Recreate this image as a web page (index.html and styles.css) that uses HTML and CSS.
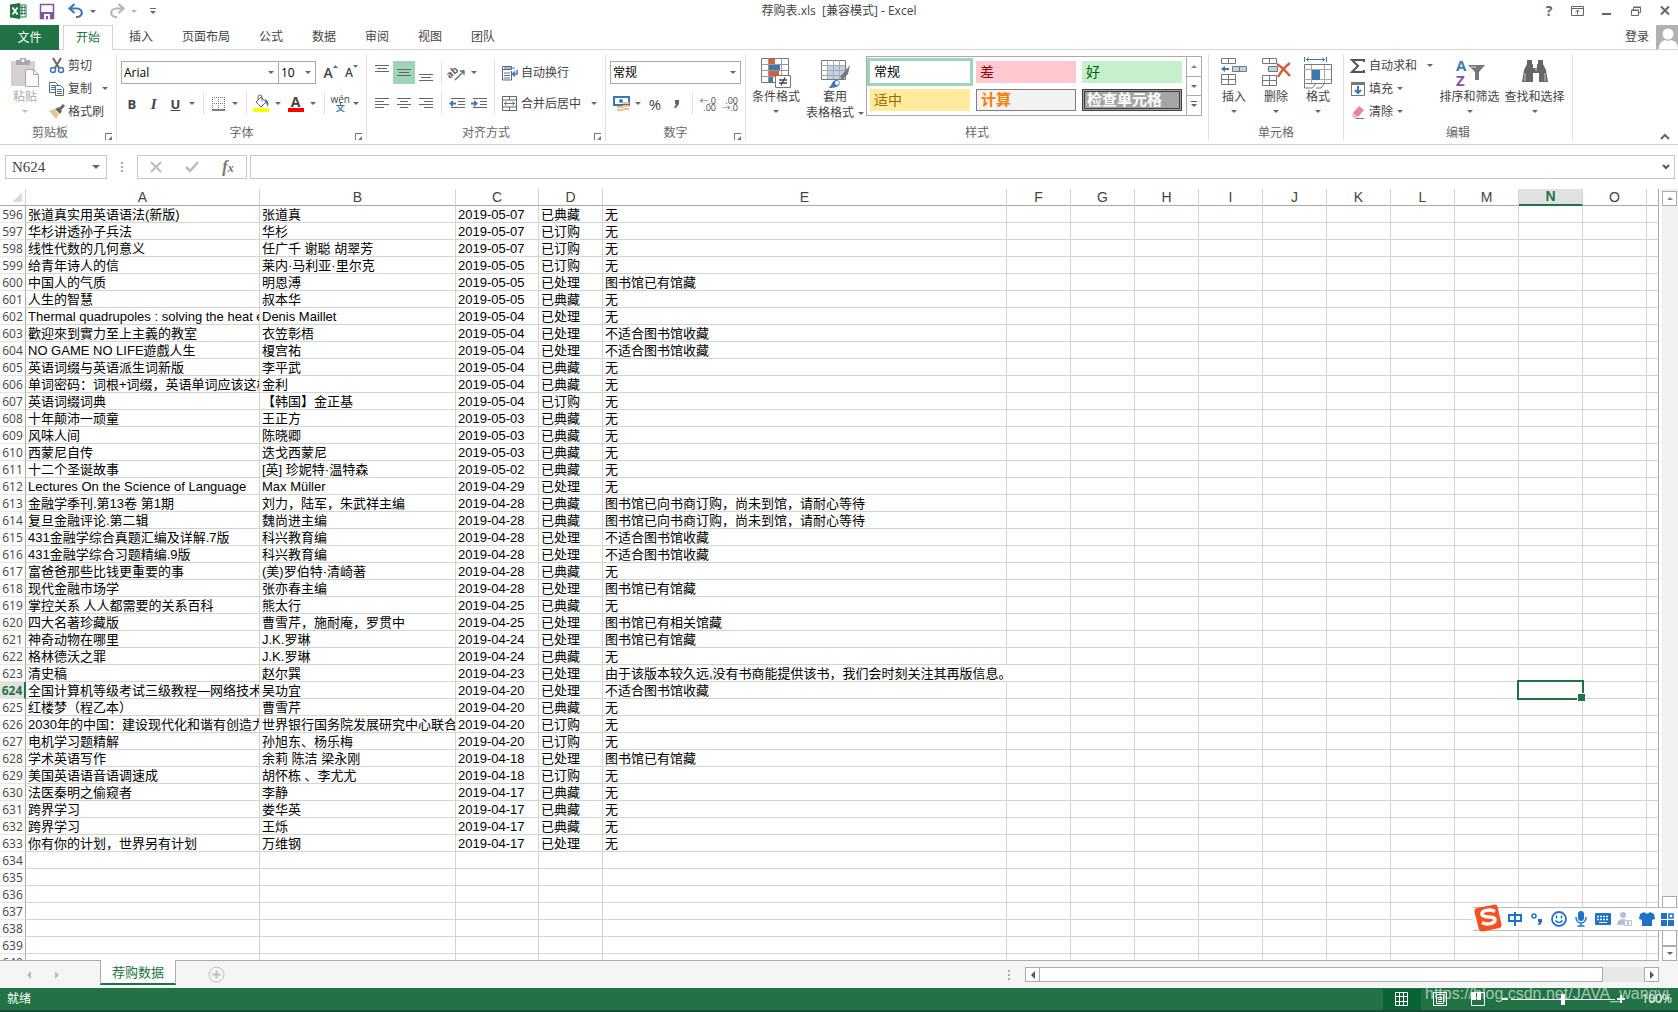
FILE: index.html
```html
<!DOCTYPE html>
<html lang="zh-CN">
<head>
<meta charset="utf-8">
<title>荐购表.xls [兼容模式] - Excel</title>
<link rel="stylesheet" href="styles.css">
</head>
<body>
<header class="titlebar">
  <div class="quick">
    <svg class="ico" width="22" height="18" viewBox="0 0 22 18"><path d="M13 3h6v12h-6z" fill="#fff" stroke="#217346"/><path d="M14 5h2v1h-2zM17 5h1v1h-1zM14 8h2v1h-2zM17 8h1v1h-1zM14 11h2v1h-2zM17 11h1v1h-1z" fill="#217346" stroke="#217346"/><path d="M3 2.500 13 1v16L3 15.500z" fill="#217346"/><path d="m5.500 5.500 5 7M10.500 5.500l-5 7" stroke="#fff" stroke-width="1.800"/></svg>
    <button class="btn" aria-label="保存"><svg width="22" height="18" viewBox="0 0 22 18"><path d="M4.500 2.500h13v14h-13z" fill="#fff" stroke="#8453a8" stroke-width="1.500"/><path d="M4 10h14v7H4z" fill="#8453a8"/><path d="M8 12h6v5h-2v-3h-2v3H8z" fill="#fff"/></svg></button>
    <span class="split"><button class="btn" aria-label="撤消"><svg width="22" height="18" viewBox="0 0 22 18"><path d="M5 6.500h7a4.500 4 0 0 1 0 8.500h-1M9.500 2 4.500 6.500l5 4.500" fill="none" stroke="#3e78b3" stroke-width="2.200"/></svg></button><button class="arrow" aria-label="撤消选项"></button></span>
    <span class="split"><button class="btn" aria-label="恢复"><svg width="22" height="18" viewBox="0 0 22 18"><path d="M17 6.500h-7a4.500 4 0 0 0 0 8.500h1M12.500 2l5 4.500-5 4.500" fill="none" stroke="#b5b5b5" stroke-width="2.200"/></svg></button><button class="arrow pale" aria-label="恢复选项"></button></span>
    <button class="arrow lined" aria-label="自定义快速访问工具栏"></button>
  </div>
  <h1 class="title">荐购表.xls&nbsp; [兼容模式] - Excel</h1>
  <div class="winctl">
    <button class="btn" aria-label="帮助"><b>?</b></button>
    <button class="btn" aria-label="功能区显示选项"><svg width="14" height="12" viewBox="0 0 14 12"><path d="M.5 1.500h12v9H.5zM.5 3.500h12M6.500 9.500V5M4.500 7l2-2 2 2" fill="none" stroke="#666"/></svg></button>
    <button class="btn" aria-label="最小化"><svg width="14" height="12" viewBox="0 0 14 12"><path d="M2 8h9v2H2z" fill="#666"/></svg></button>
    <button class="btn" aria-label="还原"><svg width="14" height="12" viewBox="0 0 14 12"><path d="M4.500 5V2.500h7v5H9M2.500 5.500h7v5h-7zM2 5h8M4 2h8" fill="none" stroke="#666"/></svg></button>
    <button class="btn" aria-label="关闭"><svg width="14" height="12" viewBox="0 0 14 12"><path d="m3 1.500 8 8M11 1.500l-8 8" stroke="#666" stroke-width="2"/></svg></button>
  </div>
</header>

<nav class="tabs">
  <button class="tab file">文件</button>
  <button class="tab active">开始</button>
  <button class="tab">插入</button>
  <button class="tab">页面布局</button>
  <button class="tab">公式</button>
  <button class="tab">数据</button>
  <button class="tab">审阅</button>
  <button class="tab">视图</button>
  <button class="tab">团队</button>
  <a class="signin" href="#">登录
    <svg width="22" height="24" viewBox="0 0 22 24"><path d="M0 0h22v24H0z" fill="#b1b1b1"/><circle cx="12" cy="9" r="5.500" fill="#fff"/><path d="M3 24c0-6 3-8 6-9l3 1 3-1c4 1 7 3 7 9z" fill="#fff"/></svg>
  </a>
</nav>

<section class="ribbon">
  <div class="group g-clip">
    <div class="body">
      <button class="big disabled"><svg width="30" height="32" viewBox="0 0 30 32"><path d="M1 4h24v25H1z" fill="#d4d0d4"/><path d="M6 3h4V1h6v2h4v5H6z" fill="#a9a6a9"/><circle cx="13" cy="3.500" r="1.500" fill="#fff"/><path d="M15.500 12.500h8l5 5v12h-13z" fill="#fbf7fd" stroke="#a9a6a9"/><path d="M23.500 12.500v5h5" fill="none" stroke="#a9a6a9"/></svg><span>粘贴</span><i class="tri"></i></button>
      <div class="stack">
        <button class="item"><svg width="16" height="16" viewBox="0 0 16 16"><path d="m4 0 6 10M12 0 6 10" stroke="#666" stroke-width="2"/><circle cx="4" cy="12" r="2.500" fill="none" stroke="#3e78b3" stroke-width="1.500"/><circle cx="12" cy="12" r="2.500" fill="none" stroke="#3e78b3" stroke-width="1.500"/></svg>剪切</button>
        <button class="item"><svg width="16" height="16" viewBox="0 0 16 16"><path d="M.5 1.500h6l2 2v8h-8z" fill="#fff" stroke="#666"/><path d="M2 4.500h4M2 6.500h4M2 8.500h4" stroke="#3e78b3"/><path d="M6.500 4.500h5l3 3v7h-8z" fill="#fff" stroke="#666"/><path d="M8 8.500h5M8 10.500h5M8 12.500h5" stroke="#3e78b3"/></svg>复制<i class="tri far"></i></button>
        <button class="item"><svg width="16" height="16" viewBox="0 0 16 16"><path d="m0 7 5-2 5 5-3 5z" fill="#ecc389"/><path d="m6 5 4-2 3 4-2 3z" fill="#666"/><path d="m11 5 4-4" stroke="#666" stroke-width="3"/></svg>格式刷</button>
      </div>
    </div>
    <div class="caption">剪贴板<button class="launch" aria-label="剪贴板设置"></button></div>
  </div>

  <div class="group g-font">
    <div class="body rows">
      <div class="row">
        <label class="combo font"><select aria-label="字体"><option>Arial</option></select></label><label class="combo size"><select aria-label="字号"><option>10</option></select></label>
        <button class="btn tool grow" aria-label="增大字号"><b>A</b><svg width="5" height="3" viewBox="0 0 5 3"><path d="M0 3h5L2.500 0z" fill="#3e78b3"/></svg></button>
        <button class="btn tool shrink" aria-label="减小字号"><b>A</b><svg width="5" height="3" viewBox="0 0 5 3"><path d="M0 0h5L2.500 3z" fill="#3e78b3"/></svg></button>
      </div>
      <div class="row">
        <button class="btn tool"><b>B</b></button><button class="btn tool"><b class="ital">I</b></button><button class="btn tool"><b class="under">U</b></button><button class="arrow" aria-label="下划线选项"></button>
        <i class="sep"></i>
        <button class="btn narrow" aria-label="边框"><svg width="14" height="14" viewBox="0 0 14 14"><path d="M.5 0v13M6.500 0v13M12.500 0v13M0 .5h13M0 6.500h13" stroke="#777" stroke-dasharray="1 1"/><path d="M0 13h13" stroke="#555" stroke-width="1.500"/></svg></button><button class="arrow" aria-label="边框选项"></button>
        <i class="sep"></i>
        <button class="btn narrow" aria-label="填充颜色"><svg width="17" height="17" viewBox="0 0 17 17"><path d="m3 7 5-5 5 5-5 5z" fill="#fff" stroke="#666"/><path d="M5 5V2a2 2 0 0 1 4 0v4" fill="none" stroke="#666"/><path d="M12 4c3 1 4 4 3 8l-2-4z" fill="#3e78b3"/><path d="M0 13h16v4H0z" fill="#ff0"/></svg></button><button class="arrow" aria-label="填充颜色选项"></button>
        <button class="btn wide fontcolor" aria-label="字体颜色"><b>A</b></button><button class="arrow" aria-label="字体颜色选项"></button>
        <i class="sep"></i>
        <button class="btn narrow pinyin" aria-label="拼音">wén<b>文</b></button><button class="arrow" aria-label="拼音选项"></button>
      </div>
    </div>
    <div class="caption">字体<button class="launch" aria-label="字体设置"></button></div>
  </div>

  <div class="group g-align">
    <div class="body">
      <div class="rows">
        <div class="row">
          <button class="btn tool" aria-label="顶端对齐"><svg width="14" height="16" viewBox="0 0 14 16"><path d="M0 .5h14M2 3.500h10M0 6.500h14" stroke="#666"/></svg></button><button class="btn tool on" aria-label="垂直居中"><svg width="14" height="16" viewBox="0 0 14 16"><path d="M0 4.500h14M2 7.500h10M0 10.500h14" stroke="#666"/></svg></button><button class="btn tool" aria-label="底端对齐"><svg width="14" height="16" viewBox="0 0 14 16"><path d="M0 9.500h14M2 12.500h10M0 15.500h14" stroke="#666"/></svg></button>
        </div>
        <div class="row">
          <button class="btn tool" aria-label="左对齐"><svg width="14" height="12" viewBox="0 0 14 12"><path d="M0 .5h14M0 3.500h9M0 6.500h14M0 9.500h9" stroke="#666"/></svg></button><button class="btn tool" aria-label="居中"><svg width="14" height="12" viewBox="0 0 14 12"><path d="M0 .5h14M3 3.500h8M0 6.500h14M3 9.500h8" stroke="#666"/></svg></button><button class="btn tool" aria-label="右对齐"><svg width="14" height="12" viewBox="0 0 14 12"><path d="M0 .5h14M5 3.500h9M0 6.500h14M5 9.500h9" stroke="#666"/></svg></button>
        </div>
      </div>
      <div class="rows"><i class="sep tight"></i><i class="sep tight"></i></div>
      <div class="rows">
        <div class="row">
          <button class="btn tool" aria-label="方向"><svg width="16" height="16" viewBox="0 0 16 16"><text class="ab" x="-2" y="9" transform="rotate(-40 6 8)">ab</text><path d="m6 15 9-9M11 6h4v4" fill="none" stroke="#666" stroke-width="1.300"/></svg></button><button class="arrow" aria-label="方向选项"></button>
        </div>
        <div class="row">
          <button class="btn tool" aria-label="减少缩进量"><svg width="16" height="12" viewBox="0 0 16 12"><path d="M2 .5h14M9 3.500h7M9 6.500h7M2 9.500h14" stroke="#666"/><path d="M0 5.500 4 2v2.500h3v2H4V9z" fill="#3e78b3"/></svg></button><button class="btn tool" aria-label="增加缩进量"><svg width="16" height="12" viewBox="0 0 16 12"><path d="M2 .5h14M9 3.500h7M9 6.500h7M2 9.500h14" stroke="#666"/><path d="M7 5.500 3 2v2.500H0v2h3V9z" fill="#3e78b3"/></svg></button>
        </div>
      </div>
      <i class="sep tight tall"></i>
      <div class="rows wraps">
        <button class="item row"><svg width="16" height="16" viewBox="0 0 16 16"><path d="M.5 1.500h9v3h-9z" fill="#fff" stroke="#666"/><path d="M2 3h11M2 8h6M2 10.500h6M2 13h6" stroke="#3e78b3"/><path d="M9.500 6v9h-9V5" fill="none" stroke="#666"/><path d="M15 5v4h-4M13 6.500 10.500 9l2.500 2.500" fill="none" stroke="#3e78b3" stroke-width="1.500"/></svg>自动换行</button>
        <button class="item row"><svg width="16" height="16" viewBox="0 0 16 16"><path d="M.5.500h14v14H.5zM.5 4h14M.5 11h14M7.500.5V4M7.500 11v4" fill="none" stroke="#666"/><path d="M2 7.500h11M4.500 5.500l-2 2 2 2M10.500 5.500l2 2-2 2" fill="none" stroke="#3e78b3"/></svg>合并后居中<i class="tri far"></i></button>
      </div>
    </div>
    <div class="caption">对齐方式<button class="launch" aria-label="对齐设置"></button></div>
  </div>

  <div class="group g-num">
    <div class="body rows">
      <div class="row"><label class="combo num"><select aria-label="数字格式"><option>常规</option></select></label></div>
      <div class="row">
        <button class="btn tool" aria-label="会计数字格式"><svg width="17" height="16" viewBox="0 0 17 16"><path d="M1 1h15v8H1z" fill="#fff" stroke="#3e78b3" stroke-width="2"/><circle cx="8" cy="5" r="2" fill="#3e78b3"/><path d="M10 6h6v2h-6zM10 9h6v2h-6zM4 10h6v2H4zM4 13h6v2H4zM10 12h6v2h-6z" fill="#ecc389"/></svg></button><button class="arrow" aria-label="会计格式选项"></button>
        <button class="btn tool pct">%</button><button class="btn tool comma" aria-label="千位分隔"><svg width="6" height="8" viewBox="0 0 6 8"><path d="M1 0h4v4L2 8H0l2-4H1z" fill="#666"/></svg></button>
        <i class="sep tight"></i>
        <button class="btn tool dec"><span><em>←</em>.0</span><span>.00</span></button><button class="btn tool dec"><span>.00</span><span><em>→</em>.0</span></button>
      </div>
    </div>
    <div class="caption">数字<button class="launch" aria-label="数字设置"></button></div>
  </div>

  <div class="group g-style">
    <div class="body">
      <button class="big"><svg width="32" height="32" viewBox="0 0 32 32"><path d="M1.500 1.500h27v24h-27z" fill="#fff" stroke="#777"/><path d="M8.500 1v24M21.500 1v24M1 7.500h27M1 13.500h27M1 19.500h27" stroke="#999"/><path d="M9 2h6v5H9zM9 14h10v5H9z" fill="#d65c3b"/><path d="M9 8h11v5H9zM9 20h4v5H9z" fill="#3e78b3"/><path d="M15.500 18.500h15v12h-15z" fill="#fff" stroke="#777"/><path d="M19 23h8M19 26h8M25 20.500l-4 8" stroke="#444" stroke-width="1.300"/></svg><span>条件格式</span><i class="tri"></i></button>
      <button class="big astable"><svg width="32" height="32" viewBox="0 0 32 32"><path d="M2.500 3.500h24v19h-24z" fill="#fff" stroke="#777"/><path d="M9 8h17v14H9z" fill="#bdd3ea"/><path d="M8.500 3v19M14.500 3v19M20.500 3v19M2 8.500h24M2 13.500h24M2 18.500h24" stroke="#aaa"/><path d="m31 8-2 9-6 6-2-3z" fill="#777"/><path d="M9 31c4-1 3-7 8-8 4 0 5 4 2 6s-7 2-10 2z" fill="#3e78b3"/><circle cx="18" cy="26" r="2" fill="#fff"/></svg><span>套用</span><span class="second">表格格式<i class="tri"></i></span></button>
      <div class="gallery">
        <div class="swatches">
          <button class="sw normal">常规</button><button class="sw bad">差</button><button class="sw good">好</button>
          <button class="sw neutral">适中</button><button class="sw calc">计算</button><button class="sw check">检查单元格</button>
        </div>
        <div class="spin"><button aria-label="上一行"><i class="tri up"></i></button><button aria-label="下一行"><i class="tri"></i></button><button aria-label="其他"><i class="tri lined"></i></button></div>
      </div>
    </div>
    <div class="caption">样式</div>
  </div>

  <div class="group g-cells">
    <div class="body">
      <button class="big"><svg width="32" height="32" viewBox="0 0 32 32"><path d="M3.500 1.500h14v5h-14zM10.500 1.500v5M3.500 17.500h14v10h-14zM10.500 17.500v10M3.500 22.500h14" fill="#fff" stroke="#777"/><path d="M14.500 9.500h14v5h-14zM21.500 9.500v5" fill="#bdd3ea" stroke="#777"/><path d="M3 12l4-3v2h4v2H7v2z" fill="#3e78b3"/></svg><span>插入</span><i class="tri"></i></button>
      <button class="big"><svg width="32" height="32" viewBox="0 0 32 32"><path d="M2.500 1.500h14v5h-14zM9.500 1.500v5M2.500 18.500h14v10h-14zM9.500 18.500v10M2.500 23.500h14" fill="#fff" stroke="#777"/><path d="M8.500 9.500h9v5h-9z" fill="#bdd3ea" stroke="#777"/><path d="M17 7q6 4 13 12M30 6q-7 5-12 14" fill="none" stroke="#d65c3b" stroke-width="2.500"/></svg><span>删除</span><i class="tri"></i></button>
      <button class="big"><svg width="32" height="32" viewBox="0 0 32 32"><path d="M2.500 7.500h27v19h-27z" fill="#fff" stroke="#777"/><path d="M9.500 8v18M22.500 8v18M2 12.500h27M2 22.500h27" stroke="#aaa"/><path d="M10 13h8v10h-8z" fill="#3e78b3"/><path d="M2.500 0v5M24.500 0v5M4 2.500h19M6.500.5l-2 2 2 2M20.500.5l2 2-2 2" fill="none" stroke="#3e78b3"/><path d="M2.500 27v4h8l3-4M14 31h5l3-4" fill="none" stroke="#777"/></svg><span>格式</span><i class="tri"></i></button>
    </div>
    <div class="caption">单元格</div>
  </div>

  <div class="group g-edit">
    <div class="body">
      <div class="stack">
        <button class="item"><svg width="16" height="16" viewBox="0 0 16 16"><path d="M14 4V2H2l6 6-6 6h12v-2" fill="none" stroke="#555" stroke-width="2"/></svg>自动求和<i class="tri far"></i></button>
        <button class="item"><svg width="16" height="16" viewBox="0 0 16 16"><path d="M1.500 1.500h13v13h-13z" fill="#fff" stroke="#777"/><path d="M1 1h14v3H1z" fill="#777"/><path d="M8 5v7M5 9l3 3 3-3" fill="none" stroke="#3e78b3" stroke-width="2"/></svg>填充<i class="tri near"></i></button>
        <button class="item"><svg width="16" height="16" viewBox="0 0 16 16"><path d="m3 9 6-7 5 4-6 7z" fill="#e8839b"/><path d="m3 9 5 4-2 1H4l-2-2z" fill="#f3b4c2"/><path d="M6 14.500h8" stroke="#777"/></svg>清除<i class="tri near"></i></button>
      </div>
      <button class="big"><svg width="32" height="32" viewBox="0 0 32 32"><text class="az a" x="2" y="14">A</text><text class="az z" x="2" y="29">Z</text><path d="M14 8h17l-6 7v8h-4v-8z" fill="#777"/><path d="M17 10h5" stroke="#ddd"/></svg><span>排序和筛选</span><i class="tri"></i></button>
      <button class="big"><svg width="32" height="32" viewBox="0 0 32 32"><path d="M8 3h5v4h1v4h4V7h1V3h5v4l3 6 2 12h-9v-9h-6v9H3l2-12 3-6z" fill="#666"/><path d="M6 16v8M17 10v4M26 16v8" stroke="#ccc"/></svg><span>查找和选择</span><i class="tri"></i></button>
    </div>
    <div class="caption">编辑</div>
  </div>
  <button class="btn collapse" aria-label="折叠功能区"><svg width="10" height="8" viewBox="0 0 10 8"><path d="m1 6 4-4 4 4" fill="none" stroke="#666" stroke-width="2"/></svg></button>
</section>

<section class="formula">
  <label class="namebox"><input value="N624" aria-label="名称框"></label>
  <i class="dots"></i>
  <div class="fx">
    <button class="btn" aria-label="取消"><svg width="12" height="12" viewBox="0 0 12 12"><path d="m1 1 10 10M11 1 1 11" stroke="#bbb" stroke-width="2"/></svg></button>
    <button class="btn" aria-label="输入"><svg width="14" height="12" viewBox="0 0 14 12"><path d="m1 6 4 4 8-9" fill="none" stroke="#bbb" stroke-width="2.500"/></svg></button>
    <button class="btn fn" aria-label="插入函数"><i>f<small>x</small></i></button>
  </div>
  <label class="entry"><input aria-label="编辑栏"><svg width="8" height="6" viewBox="0 0 8 6"><path d="m1 1 3 3 3-3" fill="none" stroke="#555" stroke-width="2"/></svg></label>
</section>

<main class="sheet">
  <div class="cells">
    <table class="grid">
      <colgroup><col class="c-head"><col class="c-title"><col class="c-author"><col class="c-date"><col class="c-state"><col class="c-note"><col span="11" class="c-std"></colgroup>
      <thead><tr id="letters"></tr></thead>
      <tbody id="rows"></tbody>
    </table>
  </div>
  <div class="vscroll"><button aria-label="向上滚动"><i class="tri up"></i></button><span class="thumb"></span><button aria-label="向下滚动"><i class="tri"></i></button></div>
</main>

<footer class="sheetbar">
  <button class="btn nav" aria-label="上一个工作表"><svg width="4" height="8" viewBox="0 0 4 8"><path d="M4 0v8L0 4z" fill="#bbb"/></svg></button>
  <button class="btn nav" aria-label="下一个工作表"><svg width="4" height="8" viewBox="0 0 4 8"><path d="M0 0v8l4-4z" fill="#bbb"/></svg></button>
  <button class="sheettab">荐购数据</button>
  <button class="btn add" aria-label="新工作表"><svg width="17" height="17" viewBox="0 0 17 17"><circle cx="8.500" cy="8.500" r="7.500" fill="none" stroke="#c0c0c0"/><path d="M8.500 4.500v8M4.500 8.500h8" stroke="#c0c0c0" stroke-width="2"/></svg></button>
  <i class="dots"></i>
  <div class="hscroll"><button aria-label="向左滚动"><i class="tri left"></i></button><span class="thumb"></span><button aria-label="向右滚动"><i class="tri right"></i></button></div>
</footer>

<footer class="status">
  <span class="ready">就绪</span>
  <button class="view on" aria-label="普通"><svg width="14" height="14" viewBox="0 0 14 14"><path d="M.5.500h12v13H.5zM4.500.5v13M8.500.5v13M.5 4.500h12M.5 9.500h12" fill="none" stroke="#fff"/></svg></button>
  <button class="view" aria-label="页面布局"><svg width="14" height="14" viewBox="0 0 14 14"><path d="M.5.500h13v13H.5zM3.500 2.500h7v9h-7zM5 5.500h4M5 7.500h4M5 9.500h4" fill="none" stroke="#fff"/></svg></button>
  <button class="view" aria-label="分页预览"><svg width="14" height="14" viewBox="0 0 14 14"><path d="M.5.500h13v13H.5z" fill="none" stroke="#fff"/><path d="M1 0h4v8H1zM6 0h4v8H6z" fill="#fff"/></svg></button>
  <button class="zoombtn" aria-label="缩小"><svg width="10" height="10" viewBox="0 0 10 10"><path d="M2 4h6v2H2z" fill="#fff"/></svg></button>
  <input class="zoom" type="range" min="0" max="100" value="50" aria-label="显示比例">
  <button class="zoombtn" aria-label="放大"><svg width="10" height="10" viewBox="0 0 10 10"><path d="M4 1h2v3h3v2H6v3H4V6H1V4h3z" fill="#fff"/></svg></button>
  <span class="percent">100%</span>
  <span class="mark">https://blog.csdn.net/JAVA_wangyi</span>
</footer>

<aside class="ime">
  <svg class="logo" width="30" height="28" viewBox="0 0 30 28"><path d="M4 4 22 .500q2 0 2.500 2l4 18q0 3-2 3.500L10 27.500q-3 .5-4-2L1.500 8Q1 5 4 4z" fill="#f4511e"/><path d="M22 7.500c-5-3-14-1-13 3 1 4 13 1 13 5 0 4-8 6-13 3" fill="none" stroke="#fff" stroke-width="3.500"/></svg>
  <button class="btn"><svg width="16" height="16" viewBox="0 0 16 16"><path d="M2 4h12v6H2zM8 1v14" fill="none" stroke="#1e73c8" stroke-width="2"/></svg></button>
  <button class="btn"><svg width="16" height="16" viewBox="0 0 16 16"><circle cx="5" cy="5" r="2" fill="none" stroke="#1e73c8" stroke-width="1.500"/><path d="M9 8h4v3l-2 3H9l1-3H9z" fill="#1e73c8"/></svg></button>
  <button class="btn"><svg width="16" height="16" viewBox="0 0 16 16"><circle cx="8" cy="8" r="7" fill="none" stroke="#1e73c8" stroke-width="1.800"/><path d="M5.500 4.500v3M10.500 4.500v3M4.500 9.500q3.500 4 7 0" fill="none" stroke="#1e73c8" stroke-width="1.500"/></svg></button>
  <button class="btn"><svg width="16" height="16" viewBox="0 0 16 16"><rect x="5" y="0" width="6" height="10" rx="3" fill="#1e73c8"/><path d="M3 6c0 8 10 8 10 0M8 12v3M4.500 15h7" fill="none" stroke="#1e73c8" stroke-width="1.500"/></svg></button>
  <button class="btn"><svg width="16" height="16" viewBox="0 0 16 16"><rect x="0" y="2" width="16" height="12" rx="1" fill="#1e73c8"/><path d="M2 5.500h12M2 8.500h12" stroke="#fff" stroke-width="1.500" stroke-dasharray="2 1"/><path d="M4 11.500h8" stroke="#fff"/></svg></button>
  <button class="btn"><svg width="16" height="16" viewBox="0 0 16 16"><circle cx="6" cy="4" r="3" fill="#b3bfd6"/><path d="M0 14q0-6 6-6t6 6z" fill="#b3bfd6"/><path d="M7.500 9.500h3v5h-3zM11.500 9.500h3v5h-3z" fill="#fff" stroke="#b3bfd6"/></svg></button>
  <button class="btn"><svg width="16" height="16" viewBox="0 0 16 16"><path d="M5 1q3 3 6 0l4 2 1 5-3 1v6H3V9L0 8l1-5z" fill="#1e73c8"/></svg></button>
  <button class="btn"><svg width="16" height="16" viewBox="0 0 16 16"><path d="M1 2h6v6H1zM1 9h6v6H1zM8 9h6v6H8z" fill="#1e73c8"/><path d="M9 3h4v4H9z" fill="#fff" stroke="#1e73c8" stroke-width="1.500"/></svg></button>
</aside>
<script src="sheet.js"></script>
</body>
</html>
```
FILE: sheet.js
```js
const FIRST_ROW = 596;
const LAST_ROW = 640;
const LETTERS = "ABCDEFGHIJKLMNOP".split("");
const ACTIVE = { row: 624, col: "N" };
const NONE = "无";
const UNFIT = "不适合图书馆收藏";
const OWNED = "图书馆已有馆藏";
const ORDERED = "图书馆已向书商订购，尚未到馆，请耐心等待";

const records = [
  ["张道真实用英语语法(新版)", "张道真", "2019-05-07", "已典藏", NONE],
  ["华杉讲透孙子兵法", "华杉", "2019-05-07", "已订购", NONE],
  ["线性代数的几何意义", "任广千 谢聪 胡翠芳", "2019-05-07", "已订购", NONE],
  ["给青年诗人的信", "莱内·马利亚·里尔克", "2019-05-05", "已订购", NONE],
  ["中国人的气质", "明恩溥", "2019-05-05", "已处理", OWNED],
  ["人生的智慧", "叔本华", "2019-05-05", "已典藏", NONE],
  ["Thermal quadrupoles : solving the heat equation", "Denis Maillet", "2019-05-04", "已处理", NONE],
  ["歡迎來到實力至上主義的教室", "衣笠彰梧", "2019-05-04", "已处理", UNFIT],
  ["NO GAME NO LIFE遊戲人生", "榎宫祐", "2019-05-04", "已处理", UNFIT],
  ["英语词缀与英语派生词新版", "李平武", "2019-05-04", "已典藏", NONE],
  ["单词密码：词根+词缀，英语单词应该这样记", "金利", "2019-05-04", "已典藏", NONE],
  ["英语词缀词典", "【韩国】金正基", "2019-05-04", "已订购", NONE],
  ["十年颠沛一顽童", "王正方", "2019-05-03", "已典藏", NONE],
  ["风味人间", "陈晓卿", "2019-05-03", "已典藏", NONE],
  ["西蒙尼自传", "迭戈西蒙尼", "2019-05-03", "已典藏", NONE],
  ["十二个圣诞故事", "[英] 珍妮特·温特森", "2019-05-02", "已典藏", NONE],
  ["Lectures On the Science of Language", "Max Müller", "2019-04-29", "已处理", NONE],
  ["金融学季刊.第13卷 第1期", "刘力，陆军，朱武祥主编", "2019-04-28", "已典藏", ORDERED],
  ["复旦金融评论.第二辑", "魏尚进主编", "2019-04-28", "已典藏", ORDERED],
  ["431金融学综合真题汇编及详解.7版", "科兴教育编", "2019-04-28", "已处理", UNFIT],
  ["431金融学综合习题精编.9版", "科兴教育编", "2019-04-28", "已处理", UNFIT],
  ["富爸爸那些比钱更重要的事", "(美)罗伯特·清崎著", "2019-04-28", "已典藏", NONE],
  ["现代金融市场学", "张亦春主编", "2019-04-28", "已处理", OWNED],
  ["掌控关系 人人都需要的关系百科", "熊太行", "2019-04-25", "已典藏", NONE],
  ["四大名著珍藏版", "曹雪芹，施耐庵，罗贯中", "2019-04-25", "已处理", "图书馆已有相关馆藏"],
  ["神奇动物在哪里", "J.K.罗琳", "2019-04-24", "已处理", OWNED],
  ["格林德沃之罪", "J.K.罗琳", "2019-04-24", "已典藏", NONE],
  ["清史稿", "赵尔巽", "2019-04-23", "已处理", "由于该版本较久远,没有书商能提供该书，我们会时刻关注其再版信息。"],
  ["全国计算机等级考试三级教程—网络技术", "吴功宜", "2019-04-20", "已处理", UNFIT],
  ["红楼梦（程乙本）", "曹雪芹", "2019-04-20", "已典藏", NONE],
  ["2030年的中国：建设现代化和谐有创造力", "世界银行国务院发展研究中心联合", "2019-04-20", "已订购", NONE],
  ["电机学习题精解", "孙旭东、杨乐梅", "2019-04-20", "已订购", NONE],
  ["学术英语写作", "余莉 陈洁 梁永刚", "2019-04-18", "已处理", OWNED],
  ["美国英语语音语调速成", "胡怀栋 、李尤尤", "2019-04-18", "已订购", NONE],
  ["法医秦明之偷窥者", "李静", "2019-04-17", "已典藏", NONE],
  ["跨界学习", "娄华英", "2019-04-17", "已典藏", NONE],
  ["跨界学习", "王烁", "2019-04-17", "已典藏", NONE],
  ["你有你的计划，世界另有计划", "万维钢", "2019-04-17", "已处理", NONE],
];

function cell(tag, text, className) {
  const el = document.createElement(tag);
  el.textContent = text;
  if (className) el.className = className;
  return el;
}

const letters = document.getElementById("letters");
letters.append(cell("td", "", "corner"));
LETTERS.forEach((l) => letters.append(cell("th", l, l === ACTIVE.col ? "current" : "")));

const body = document.getElementById("rows");
for (let n = FIRST_ROW; n <= LAST_ROW; n++) {
  const tr = document.createElement("tr");
  tr.append(cell("th", n, n === ACTIVE.row ? "current" : ""));
  const record = records[n - FIRST_ROW] || [];
  LETTERS.forEach((l, i) => {
    const td = cell("td", record[i] || "");
    if (n === ACTIVE.row && l === ACTIVE.col) td.className = "selected";
    // a long note runs up to the next column, so its right gridline is hidden
    if (i === 4 && (record[i] || "").length > 30) td.className = "spill";
    tr.append(td);
  });
  body.append(tr);
}
```
FILE: styles.css
```css
* { box-sizing: border-box; }

body {
  margin: 0;
  height: 100vh;
  display: flex;
  flex-direction: column;
  overflow: hidden;
  position: relative;
  background: #fff;
  color: #444;
  font: 12px/16px "Open Sans", "Noto Sans CJK SC", sans-serif;
}

button, input, select {
  margin: 0;
  padding: 0;
  border: 0;
  background: none;
  color: inherit;
  font: inherit;
  outline: 0;
}

svg { display: block; flex: none; overflow: visible; }

.btn {
  display: inline-flex;
  align-items: center;
  justify-content: center;
}

.arrow {
  width: 12px;
  height: 22px;
  display: inline-flex;
  flex-direction: column;
  align-items: center;
  justify-content: center;
}

.arrow::after, .tri {
  content: "";
  display: block;
  flex: none;
  border: 3px solid transparent;
  border-top-color: #666;
  border-bottom: 0;
}

.arrow.pale::after { border-top-color: #b5b5b5; }

.arrow.lined::before {
  content: "";
  width: 6px;
  height: 1px;
  margin-bottom: 2px;
  background: #666;
}

.tri.up { border: 3px solid transparent; border-bottom-color: #888; border-top: 0; }
.tri.left { border: 4px solid transparent; border-right-color: #555; border-left: 0; }
.tri.right { border: 4px solid transparent; border-left-color: #555; border-right: 0; }
.tri.lined { position: relative; }
.tri.lined::before { content: ""; position: absolute; left: -3px; top: -6px; width: 6px; height: 1px; background: #666; }

/* title bar */
.titlebar {
  flex: none;
  height: 25px;
  display: grid;
  grid-template-columns: 1fr auto 1fr;
  align-items: center;
  padding-bottom: 3px;
}

.quick { display: flex; align-items: center; gap: 7px; padding-left: 7px; height: 22px; }
.split { display: inline-flex; align-items: center; }
.title { margin: 0; font-size: 12px; font-weight: 400; white-space: nowrap; }
.winctl { display: flex; justify-content: flex-end; gap: 5px; padding-right: 1px; }
.winctl .btn { width: 24px; height: 20px; color: #666; font-size: 14px; }

/* ribbon tabs */
.tabs { flex: none; height: 25px; display: flex; border-bottom: 1px solid #d4d4d4; }
.tab { padding: 0 14px; height: 24px; margin-right: 1px; }
.tab.file { width: 59px; height: 25px; margin-right: 4px; background: #217346; color: #fff; }
.tab.active { padding: 0 12px; height: 25px; margin-right: 2px; border: 1px solid #d4d4d4; border-bottom: 0; background: #fff; color: #217346; }
.signin { margin-left: auto; display: flex; align-items: center; gap: 7px; color: #444; text-decoration: none; }

/* ribbon */
.ribbon { flex: none; height: 95px; display: flex; padding: 4px 0 3px; border-bottom: 1px solid #d4d4d4; }
.group { display: flex; flex-direction: column; border-right: 1px solid #e1e1e1; flex: none; }
.g-clip { width: 117px; }
.g-font { width: 250px; }
.g-align { width: 239px; }
.g-num { width: 140px; }
.g-style { width: 463px; }
.g-cells { width: 135px; }
.g-edit { width: 229px; }

.body { flex: none; height: 71px; display: flex; padding: 0 4px; }
.caption { position: relative; height: 16px; text-align: center; color: #666; }
.g-clip .caption { padding-right: 16px; }

.launch { position: absolute; right: 4px; bottom: 1px; width: 7px; height: 7px; border: 1px solid #777; border-right: 0; border-bottom: 0; }
.launch::after { content: ""; position: absolute; right: 0; bottom: 0; border: 2px solid #777; border-top-color: transparent; border-left-color: transparent; }

.big { display: flex; flex-direction: column; align-items: center; padding-top: 3px; width: 42px; white-space: nowrap; }
.big .tri { margin-top: 5px; }
.big .second { display: flex; align-items: center; gap: 4px; }
.big .second .tri { margin: 0; }
.big.disabled { color: #aaa; }
.big.disabled .tri { border-top-color: #bbb; }

.stack { display: flex; flex-direction: column; }
.stack .item { height: 23px; }
.item { display: flex; align-items: center; gap: 3px; white-space: nowrap; }
.item .far { margin-left: 7px; }
.item .near { margin-left: 1px; }

.rows { display: flex; flex-direction: column; gap: 8px; padding-top: 7px; }
.body.rows { padding: 7px 4px 0; }
.row { display: flex; align-items: center; height: 23px; }
.tool { width: 22px; height: 23px; }
.tool b { font: bold 13px/16px "Open Sans", sans-serif; }
.tool .ital { font: italic bold 15px/16px "Liberation Serif", serif; }
.tool .under { text-decoration: underline; }
.narrow { width: 20px; height: 23px; }
.wide { width: 24px; height: 23px; }
.on { background: #9fd5b7; }

.sep { flex: none; width: 1px; height: 23px; margin: 0 5px; background: #e1e1e1; }
.sep.tight { margin: 0 4px; }
.sep.tall { height: 55px; margin-top: 6px; }

.combo { position: relative; display: block; height: 23px; border: 1px solid #ababab; color: #000; }
.combo select { width: 100%; height: 21px; padding-left: 2px; appearance: none; font-size: 12px; }
.combo::after { content: ""; position: absolute; right: 4px; top: 9px; border: 3px solid transparent; border-top-color: #666; border-bottom: 0; }
.combo.font { width: 158px; }
.combo.size { width: 40px; margin-left: -1px; }
.combo.num { width: 131px; }
.combo.num { flex: none; }
.combo.font { flex: none; }

.grow { margin-left: 4px; }
.tool.grow b { font-size: 14px; font-weight: 600; }
.tool.shrink b { font-size: 12px; font-weight: 600; }
.tool.grow svg, .tool.shrink svg { align-self: flex-start; margin-top: 4px; }

.fontcolor b { width: 16px; height: 17px; border-bottom: 4px solid #f00; font: bold 14px/14px "Open Sans", sans-serif; }
.pinyin { flex-direction: column; font-size: 10px; line-height: 8px; }
.pinyin b { color: #3e78b3; font-size: 9px; line-height: 9px; }
.pct { font-size: 15px; }
.dec { flex-direction: column; align-items: flex-end; font-size: 9px; line-height: 7px; padding-right: 3px; }
.dec em { color: #3e78b3; font-style: normal; }
.ab { font: bold 10px "Open Sans", sans-serif; fill: #666; }
.az { font: bold 15px "Open Sans", sans-serif; }
.a { fill: #3e78b3; }
.z { fill: #8453a8; }
.wraps { padding-left: 3px; }

.g-clip .stack { margin-left: 3px; }
.g-style .big { width: 54px; }
.g-style .astable { margin-left: 4px; width: 56px; }
.g-style .body { padding: 0 0 0 3px; }
.gallery { display: flex; height: 60px; margin: 2px 0 0 3px; border: 1px solid #ababab; }
.swatches { display: grid; grid-template-columns: repeat(3, 100px); grid-auto-rows: 22px; gap: 6px; padding: 4px 4px 0 3px; }
.sw { padding: 0 4px 2px; text-align: left; line-height: 18px; font-size: 14px; font-family: "Noto Sans CJK SC", sans-serif; }
.normal { box-shadow: 0 0 0 3px #9fd5b7; color: #000; font-size: 13px; }
.bad { background: #ffc7ce; color: #9c0006; }
.good { background: #c6efce; color: #006100; }
.neutral { background: #ffeb9c; color: #9c6500; }
.calc { border: 1px solid #7f7f7f; background: #f2f2f2; color: #fa7d00; font-weight: 700; font-size: 15px; line-height: 16px; }
.check { border: 3px double #3f3f3f; background: #a5a5a5; color: #fff; font-weight: 700; font-size: 15px; line-height: 14px; padding: 0 2px 2px; white-space: nowrap; }
.spin { width: 15px; display: flex; flex-direction: column; border-left: 1px solid #ababab; }
.spin button { flex: 1; display: flex; align-items: center; justify-content: center; }
.spin button + button { border-top: 1px solid #ababab; }

.g-edit .stack { width: 89px; padding-left: 2px; }
.g-edit .big { width: 65px; }
.g-edit .body { padding-right: 0; }
.collapse { align-self: flex-end; margin-left: auto; padding-right: 8px; }

/* formula bar */
.formula { flex: none; display: flex; align-items: center; height: 44px; padding: 0 3px 0 5px; }
.namebox, .fx, .entry { height: 24px; border: 1px solid #c6c6c6; display: flex; align-items: center; }
.namebox { position: relative; width: 102px; }
.namebox input { width: 80px; padding-left: 6px; font: 15px/20px "Liberation Serif", serif; }
.namebox::after { content: ""; position: absolute; right: 6px; top: 9px; border: 4px solid transparent; border-top-color: #666; border-bottom: 0; }
.dots { flex: none; width: 2px; height: 10px; margin: 0 14px; background: repeating-linear-gradient(#aaa 0 2px, transparent 2px 4px); }
.fx { width: 110px; justify-content: center; }
.fx .btn { width: 36px; }
.fn i { font: italic bold 16px/18px "Liberation Serif", serif; color: #777; }
.fn small { font-size: 12px; }
.entry { flex: 1; margin-left: 3px; padding-right: 4px; }
.entry input { flex: 1; min-width: 0; }

/* worksheet */
.sheet { flex: 1; min-height: 0; display: flex; }
.cells { flex: 1; min-width: 0; overflow: hidden; border-right: 1px solid #ababab; border-bottom: 1px solid #ababab; }
.grid { width: 100%; table-layout: fixed; border-collapse: separate; border-spacing: 0; }
.c-head { width: 26px; }
.c-title { width: 234px; }
.c-author { width: 196px; }
.c-date { width: 83px; }
.c-state { width: 64px; }
.c-note { width: 404px; }
.c-std { width: 64px; }

.grid th, .grid td { height: 17px; padding: 0; font-weight: 400; white-space: nowrap; overflow: hidden; }
.grid tbody td {
  padding: 2px 0 0 2px;
  border-right: 1px solid #d4d4d4;
  border-bottom: 1px solid #d4d4d4;
  color: #000;
  font: 13px/14px "Liberation Sans", "Noto Sans CJK SC", sans-serif;
}
.grid tbody th { padding-top: 2px; border-right: 1px solid #ababab; border-bottom: 1px solid #e6e6e6; font-size: 12px; line-height: 14px; }
.grid thead th { border-right: 1px solid #d4d4d4; border-bottom: 1px solid #ababab; font: 14px/16px "Liberation Sans", sans-serif; }
.grid thead th.current { border-bottom: 2px solid #217346; background: #e1e1e1; color: #217346; font-weight: 700; line-height: 15px; }
.grid tbody th.current { border-right: 2px solid #217346; background: #e1e1e1; color: #217346; font-weight: 700; }
.grid .corner { border-right: 1px solid #d4d4d4; border-bottom: 1px solid #ababab; background: linear-gradient(135deg, transparent 50%, #dcdcdc 50%) 13px 4px / 9px 9px no-repeat; }
.grid tbody .spill { border-right-color: transparent; }
.grid .selected { position: relative; overflow: visible; }
.selected::before { content: ""; position: absolute; inset: -2px; border: 2px solid #217346; }
.selected::after { content: ""; position: absolute; right: -4px; bottom: -4px; width: 7px; height: 7px; border: 1px solid #fff; background: #217346; }

.vscroll { width: 19px; padding: 2px 0 0 3px; display: flex; flex-direction: column; background: linear-gradient(#f1f1f1, #f1f1f1) 3px 0 / 16px 100% no-repeat; }
.vscroll button, .hscroll button { flex: none; width: 15px; height: 15px; border: 1px solid #ababab; background: #fff; display: flex; align-items: center; justify-content: center; }
.thumb { border: 1px solid #ababab; background: #fff; }
.vscroll .thumb { width: 15px; height: 50px; margin-top: auto; }

/* sheet tabs */
.sheetbar { flex: none; height: 27px; display: flex; align-items: center; padding: 0 19px 0 15px; background: #f5f5f5; }
.nav { width: 28px; height: 24px; }
.sheettab { align-self: flex-start; width: 76px; height: 25px; margin: -1px 0 0 29px; border: 1px solid #ababab; border-top: 0; border-bottom: 2px solid #217346; background: #fff; color: #217346; font-size: 13px; }
.add { margin-left: 32px; }
.sheetbar .dots { margin-left: auto; margin-right: 15px; }
.hscroll { width: 634px; display: flex; background: #e8e8e8; }
.hscroll .thumb { width: 564px; margin-left: -1px; }
.hscroll button:last-child { margin-left: auto; }

/* status bar */
.status { flex: none; position: relative; height: 24px; display: flex; align-items: center; padding: 0 6px 0 7px; background: #217346; border-bottom: 2px solid #1d4a38; color: #fff; }
.ready { margin-right: auto; }
.view { width: 38px; height: 21px; display: flex; align-items: center; justify-content: center; }
.view.on { background: #0a6332; }
.zoombtn { width: 10px; height: 10px; }
.view + .zoombtn { margin-left: 3px; }
.zoom { appearance: none; width: 104px; height: 12px; margin: 0 1px; background: linear-gradient(#fff, #fff) center / 100% 1px no-repeat; }
.zoom::-webkit-slider-thumb { appearance: none; width: 4px; height: 11px; background: #fff; }
.percent { width: 46px; text-align: right; }
.mark { position: absolute; right: 9px; top: -4px; color: rgba(255, 255, 255, .6); font: 16px/20px "Liberation Sans", sans-serif; }

/* floating input method bar */
.ime { position: absolute; right: 0; bottom: 81px; display: flex; align-items: center; height: 24px; padding-left: 31px; border: 1px solid #b9b9c8; border-width: 1px 0; background: #fff; }
.ime .btn { width: 22px; }
.ime .btn:last-child { width: 20px; }
.ime .logo { position: absolute; left: 0; top: -4px; }
```
